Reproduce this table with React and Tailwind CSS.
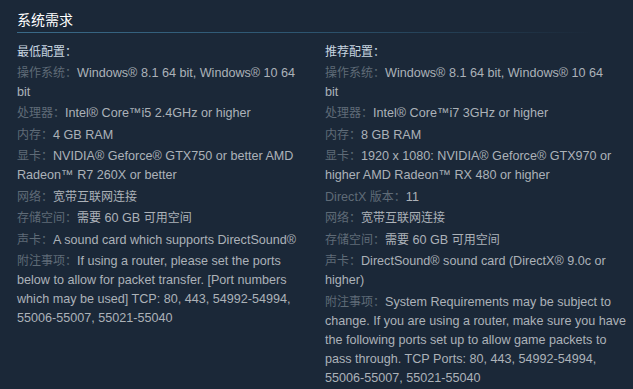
const minReqs = [
  ["操作系统：", "Windows® 8.1 64 bit, Windows® 10 64 bit"],
  ["处理器：", "Intel® Core™i5 2.4GHz or higher"],
  ["内存：", "4 GB RAM"],
  ["显卡：", "NVIDIA® Geforce® GTX750 or better AMD Radeon™ R7 260X or better"],
  ["网络：", "宽带互联网连接"],
  ["存储空间：", "需要 60 GB 可用空间"],
  ["声卡：", "A sound card which supports DirectSound®"],
  [
    "附注事项：",
    "If using a router, please set the ports below to allow for packet transfer. [Port numbers which may be used] TCP: 80, 443, 54992-54994, 55006-55007, 55021-55040",
  ],
];

// the reference wraps "bit" here, Arial is a hair narrower than Steam's font
const recReqs = [
  ["操作系统：", "Windows® 8.1 64 bit, Windows® 10 64\nbit"],
  ["处理器：", "Intel® Core™i7 3GHz or higher"],
  ["内存：", "8 GB RAM"],
  ["显卡：", "1920 x 1080: NVIDIA® Geforce® GTX970 or higher AMD Radeon™ RX 480 or higher"],
  ["DirectX 版本：", "11"],
  ["网络：", "宽带互联网连接"],
  ["存储空间：", "需要 60 GB 可用空间"],
  ["声卡：", "DirectSound® sound card (DirectX® 9.0c or higher)"],
  [
    "附注事项：",
    "System Requirements may be subject to change. If you are using a router, make sure you have the following ports set up to allow game packets to pass through. TCP Ports: 80, 443, 54992-54994, 55006-55007, 55021-55040",
  ],
];

// CJK runs are set at 12px, like the fallback font on Steam
function Mixed({ text }) {
  const parts = text.split(/([\u3000-\u9fff\uff00-\uffef]+)/);
  return parts.map((part, i) =>
    /[\u3000-\u9fff\uff00-\uffef]/.test(part) ? (
      <span key={i} className="text-[12px]">
        {part}
      </span>
    ) : (
      <span key={i}>{part}</span>
    )
  );
}

function ReqColumn({ title, items, className }) {
  return (
    <div className={className}>
      <p className="leading-[17px] text-[#c7d5e0]">
        <Mixed text={title} />
      </p>
      <ul>
        {items.map(([label, value]) => (
          <li key={label} className="whitespace-pre-line pt-[2.5px]">
            <span className="text-[#5f6b77]">
              <Mixed text={label} />
            </span>
            <Mixed text={value} />
          </li>
        ))}
      </ul>
    </div>
  );
}

export default function App() {
  return (
    <div
      className="min-h-[389px] w-[633px] bg-[#1b2838] pl-[17px] pt-[10px] text-[12.6px] leading-[19px] text-[#acb2b8]"
      style={{ fontFamily: '"Liberation Sans", Arial, "Noto Sans CJK SC", sans-serif' }}
    >
      <h2 className="text-[14px] leading-[20px] text-white">系统需求</h2>
      <div className="mt-[2px] h-px w-[575px] bg-gradient-to-r from-[#3a6a88] via-[#2d5570] to-transparent" />

      <div className="mt-[11px] flex">
        <ReqColumn title="最低配置：" items={minReqs} className="w-[294px] shrink-0" />
        <ReqColumn title="推荐配置：" items={recReqs} className="ml-[14px] w-[302px] shrink-0" />
      </div>
    </div>
  );
}
